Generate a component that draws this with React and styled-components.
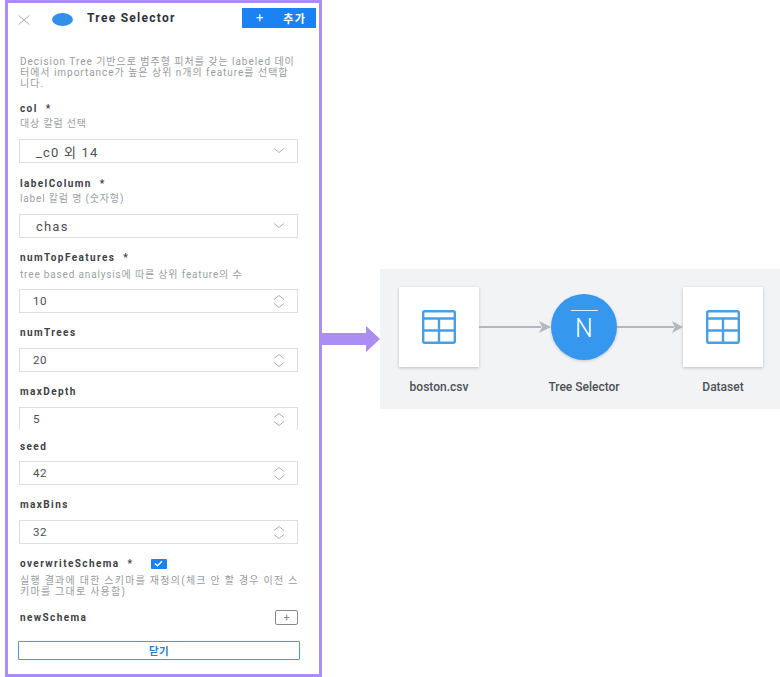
import styled, { createGlobalStyle } from 'styled-components'

const GlobalStyle = createGlobalStyle`
  html, body {
    margin: 0;
    padding: 0;
    background: #fff;
  }
  body {
    font-family: Roboto, "Noto Sans CJK KR", sans-serif;
    overflow: hidden;
  }
`

const Chevron = ({ up }) => (
  <svg width="12" height="6" viewBox="0 0 12 6" fill="none" stroke="#a2a6ab" strokeWidth="0.9">
    <path d={up ? 'M1 5.5 L6 1.5 L11 5.5' : 'M1 0.5 L6 4.5 L11 0.5'} />
  </svg>
)

const SelectField = ({ value }) => (
  <Control>
    <SelectValue>{value}</SelectValue>
    <Chevron />
  </Control>
)

const NumberField = ({ value, $cut }) => (
  <Control $cut={$cut}>
    <NumberValue>{value}</NumberValue>
    <Stepper>
      <Chevron up />
      <Chevron />
    </Stepper>
  </Control>
)

const TableIcon = () => (
  <svg width="34" height="34" viewBox="0 0 34 34" fill="none" stroke="#4a9ee2" strokeWidth="2.4">
    <rect x="1.2" y="1.2" width="31.6" height="31.6" rx="1.5" />
    <path d="M1 8.5 H33 M1 20.5 H33 M17 8.5 V33" />
  </svg>
)

const FlowArrow = () => (
  <svg width="100%" height="16" viewBox="0 0 72 16" preserveAspectRatio="none">
    <path d="M0 8 H62" stroke="#b3b8be" strokeWidth="2" />
    <path d="M60 2 L72 8 L60 14 L63 8 Z" fill="#b3b8be" />
  </svg>
)

const App = () => {
  return <Page>
    <GlobalStyle />
    <Panel>
      <Header>
        <CloseIcon width="12" height="12" viewBox="0 0 12 12" stroke="#a3a7ad" strokeWidth="0.9">
          <path d="M0.5 1.5 L11.5 10.5 M11.5 1.5 L0.5 10.5" />
        </CloseIcon>
        <HeaderDot />
        <Title>Tree Selector</Title>
        <AddButton><span>+</span><span>추가</span></AddButton>
      </Header>
      <Body>
        <Description>
          Decision Tree 기반으로 범주형 피처를 갖는 labeled 데이<br />
          터에서 importance가 높은 상위 n개의 feature를 선택합<br />
          니다.
        </Description>

        <Label $top={12}>col<Star>*</Star></Label>
        <Help $top={3}>대상 칼럼 선택</Help>
        <ControlRow $top={9}><SelectField value="_c0 외 14" /></ControlRow>

        <Label $top={13}>labelColumn<Star>*</Star></Label>
        <Help $top={3}>label 칼럼 명 (숫자형)</Help>
        <ControlRow $top={9}><SelectField value="chas" /></ControlRow>

        <Label $top={12}>numTopFeatures<Star>*</Star></Label>
        <Help $top={5}>tree based analysis에 따른 상위 feature의 수</Help>
        <ControlRow $top={8}><NumberField value="10" /></ControlRow>

        <Label $top={12}>numTrees</Label>
        <ControlRow $top={9}><NumberField value="20" /></ControlRow>

        <Label $top={12}>maxDepth</Label>
        <ControlRow $top={9}><NumberField value="5" $cut /></ControlRow>

        <Label $top={9}>seed</Label>
        <ControlRow $top={8}><NumberField value="42" /></ControlRow>

        <Label $top={12}>maxBins</Label>
        <ControlRow $top={9}><NumberField value="32" /></ControlRow>

        <Label $top={12}>
          overwriteSchema<Star>*</Star>
          <Checkbox>
            <svg width="9" height="7" viewBox="0 0 9 7" fill="none" stroke="#fff" strokeWidth="1.4">
              <path d="M1 3.5 L3.4 5.7 L8 1.2" />
            </svg>
          </Checkbox>
        </Label>
        <HelpWide>
          실행 결과에 대한 스키마를 재정의(체크 안 할 경우 이전 스<br />
          키마를 그대로 사용함)
        </HelpWide>

        <SchemaRow>
          <Label>newSchema</Label>
          <PlusButton>+</PlusButton>
        </SchemaRow>

        <CloseButton>닫기</CloseButton>
      </Body>
    </Panel>

    <BigArrow width="58" height="26" viewBox="0 0 58 26">
      <path d="M0 7 H44 V0 L58 13 L44 26 V19 H0 Z" fill="#ab8df3" />
    </BigArrow>

    <Diagram>
      <Node $width={80}>
        <Card><TableIcon /></Card>
        <NodeLabel>boston.csv</NodeLabel>
      </Node>
      <Connector $width={72}><FlowArrow /></Connector>
      <Node $width={66}>
        <Circle><Glyph>N</Glyph></Circle>
        <NodeLabel>Tree Selector</NodeLabel>
      </Node>
      <Connector $width={66}><FlowArrow /></Connector>
      <Node $width={80}>
        <Card><TableIcon /></Card>
        <NodeLabel>Dataset</NodeLabel>
      </Node>
    </Diagram>
  </Page>
}
export default App

const Page = styled.div`
  width: 780px;
  height: 677px;
  display: flex;
  align-items: flex-start;
  padding-left: 5px;
  box-sizing: border-box;
  overflow: hidden;
`

const Panel = styled.div`
  width: 317px;
  height: 677px;
  flex: none;
  box-sizing: border-box;
  border: 3px solid #ab8df3;
  background: #fff;
`

const Header = styled.div`
  height: 33px;
  display: flex;
  align-items: center;
  padding: 0 3px 0 10px;
`

const CloseIcon = styled.svg`
  flex: none;
  margin-top: 1px;
`

const HeaderDot = styled.div`
  width: 21px;
  height: 13px;
  margin-left: 22px;
  margin-top: -1px;
  border-radius: 50%;
  background: #3390ea;
`

const Title = styled.div`
  margin-left: 14px;
  margin-top: -3px;
  font-size: 12px;
  font-weight: 700;
  letter-spacing: 1.28px;
  color: #2e3238;
`

const AddButton = styled.div`
  margin-left: auto;
  width: 74px;
  height: 20px;
  margin-top: -4px;
  display: flex;
  align-items: center;
  justify-content: space-between;
  padding: 0 10px 0 14px;
  box-sizing: border-box;
  background: #1a82f2;
  color: #fff;
  font-size: 11px;
  font-weight: 700;
  letter-spacing: 1.2px;
  span:first-child {
    font-size: 13px;
    font-weight: 400;
  }
`

const Body = styled.div`
  padding: 20px 21px 0 11px;
  display: flex;
  flex-direction: column;
`

const Description = styled.div`
  padding-left: 1px;
  font-size: 10px;
  line-height: 11px;
  letter-spacing: 0.97px;
  color: #979ba0;
  white-space: nowrap;
`

const Label = styled.div`
  margin-top: ${(p) => p.$top || 0}px;
  padding-left: 1px;
  height: 14px;
  display: flex;
  align-items: center;
  font-size: 10px;
  font-weight: 700;
  letter-spacing: 1.4px;
  color: #3d4146;
  white-space: nowrap;
`

const Star = styled.span`
  margin-left: 8px;
  font-weight: 700;
`

const Help = styled.div`
  margin-top: ${(p) => p.$top || 0}px;
  padding-left: 1px;
  height: 12px;
  line-height: 12px;
  font-size: 10px;
  letter-spacing: 0.84px;
  color: #9b9fa4;
  white-space: nowrap;
`

const HelpWide = styled.div`
  margin-top: 5px;
  padding-left: 1px;
  font-size: 10px;
  line-height: 11px;
  letter-spacing: 1.25px;
  color: #979ba0;
  white-space: nowrap;
`

const ControlRow = styled.div`
  margin-top: ${(p) => p.$top || 0}px;
`

const Control = styled.div`
  width: 279px;
  height: ${(p) => (p.$cut ? 23 : 24)}px;
  box-sizing: border-box;
  border: 1px solid #dcdee0;
  border-bottom: ${(p) => (p.$cut ? 'none' : '1px solid #dcdee0')};
  display: flex;
  align-items: center;
  justify-content: space-between;
  padding-right: 12px;
  background: #fff;
`

const SelectValue = styled.div`
  margin-left: 16px;
  font-size: 13px;
  letter-spacing: 1.2px;
  color: #4c5055;
`

const NumberValue = styled.div`
  margin-left: 13px;
  font-size: 11.5px;
  letter-spacing: 0.5px;
  color: #4c5055;
`

const Stepper = styled.div`
  display: flex;
  flex-direction: column;
  gap: 3px;
`

const Checkbox = styled.div`
  width: 16px;
  height: 10px;
  margin-left: 17px;
  margin-top: 1px;
  display: flex;
  align-items: center;
  justify-content: center;
  background: #1a82f2;
  border-radius: 1px;
`

const SchemaRow = styled.div`
  margin-top: 13px;
  display: flex;
  align-items: center;
  justify-content: space-between;
  width: 279px;
`

const PlusButton = styled.div`
  width: 23px;
  height: 15px;
  box-sizing: border-box;
  border: 1px solid #85898e;
  border-radius: 2px;
  display: flex;
  align-items: center;
  justify-content: center;
  font-size: 11px;
  color: #85898e;
`

const CloseButton = styled.div`
  margin-top: 16px;
  margin-left: -1px;
  width: 282px;
  height: 19px;
  box-sizing: border-box;
  border: 1px solid #4f9ad8;
  border-radius: 1px;
  box-shadow: 0 0 1px rgba(79, 154, 216, 0.5);
  display: flex;
  align-items: center;
  justify-content: center;
  font-size: 10.5px;
  font-weight: 700;
  letter-spacing: 0.4px;
  color: #2a7fc9;
`

const BigArrow = styled.svg`
  flex: none;
  margin-top: 326px;
`

const Diagram = styled.div`
  width: 400px;
  height: 140px;
  flex: none;
  margin-top: 269px;
  box-sizing: border-box;
  padding: 18px 17px 0 19px;
  display: flex;
  align-items: flex-start;
  background: #f2f3f5;
`

const Node = styled.div`
  width: ${(p) => p.$width}px;
  flex: none;
  display: flex;
  flex-direction: column;
  align-items: center;
`

const Card = styled.div`
  width: 80px;
  height: 80px;
  display: flex;
  align-items: center;
  justify-content: center;
  background: #fff;
  box-shadow: 0 1px 3px rgba(0, 0, 0, 0.22);
`

const Circle = styled.div`
  width: 66px;
  height: 66px;
  margin: 7px 0;
  border-radius: 50%;
  display: flex;
  align-items: center;
  justify-content: center;
  background: #3597ee;
  box-shadow: 0 1px 3px rgba(0, 0, 0, 0.18);
`

const Glyph = styled.div`
  padding-top: 5px;
  width: 27px;
  border-top: 1.5px solid #dceefc;
  margin-top: -3px;
  text-align: center;
  font-size: 25px;
  line-height: 25px;
  font-weight: 300;
  color: #fff;
`

const NodeLabel = styled.div`
  margin-top: 13px;
  height: 14px;
  line-height: 14px;
  font-size: 12px;
  font-weight: 500;
  color: #4d5156;
  white-space: nowrap;
`

const Connector = styled.div`
  width: ${(p) => p.$width}px;
  height: 80px;
  flex: none;
  display: flex;
  align-items: center;
`
